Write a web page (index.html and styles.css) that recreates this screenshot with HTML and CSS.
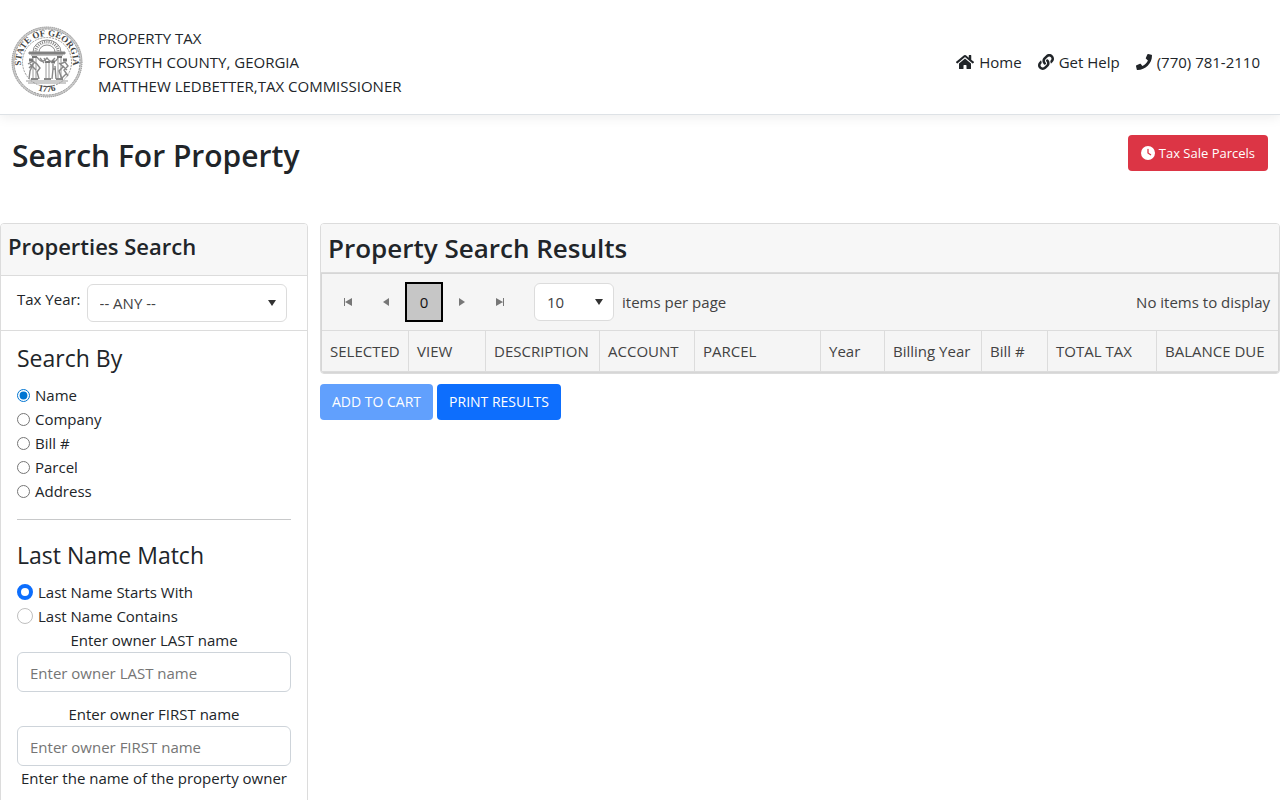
FILE: index.html
```html
<!DOCTYPE html>
<html lang="en">
<head>
    <meta charset="UTF-8">
    <meta name="viewport" content="width=device-width, initial-scale=1.0">
    <title>Search For Property</title>
    <link rel="stylesheet" href="styles.css">
</head>
<body>
    <header class="site-header">
        <div class="brand">
            <svg class="seal" viewBox="0 0 72 72" role="img" aria-label="State of Georgia seal">
                <defs>
                    <path id="sealTop" d="M10.9 42.7A26 26 0 1 1 61.1 42.7"/>
                    <path id="sealBottom" d="M18 60A30.5 30.5 0 0 0 54 60"/>
                </defs>
                <circle cx="36" cy="36" r="34" fill="#fff" stroke="#ccc" stroke-width="2.5"/>
                <circle cx="36" cy="36" r="35" fill="none" stroke="#888" stroke-width="1" stroke-dasharray="1 1"/>
                <circle cx="36" cy="36" r="33" fill="none" stroke="#999" stroke-width="1" stroke-dasharray="2 1"/>
                <circle cx="36" cy="36" r="24.500" fill="none" stroke="#999" stroke-width="1" stroke-dasharray="2 1"/>
                <text class="seal-text"><textPath href="#sealTop" startOffset="50%">STATE OF GEORGIA</textPath></text>
                <text class="seal-text"><textPath href="#sealBottom" startOffset="50%">1776</textPath></text>
                <!-- arch -->
                <path d="M22 26a14 12 0 0 1 28 0M28 26a8 7 0 0 1 16 0" fill="none" stroke="#888"/>
                <path d="M25 25.500a11 9.500 0 0 1 22 0" fill="none" stroke="#888" stroke-width="3" stroke-dasharray="1 1.200"/>
                <path d="M18 26h36v2H18zM20 29h32" fill="#777" stroke="#888"/>
                <!-- columns -->
                <path d="M21 31h5M34 36h5M46 31h5" stroke="#777" stroke-width="2"/>
                <path d="M22 32v21M25 32v21M35 37v16M38 37v16M47 32v21M50 32v21" stroke="#999" stroke-width="1"/>
                <path d="M26 31q5 8 10 1q6 8 11 0M29 32l4 5M40 36l4-4M33 32l2 4M43 33l-3 4" fill="none" stroke="#888" stroke-width="1.3"/>
                <path d="M20 53h7M33 53h7M45 53h7" stroke="#888" stroke-width="2"/>
                <!-- figures -->
                <path d="M17 38l5-3 4 3 3 4-3 4 2 7M22 38l-3 7-1 8M19 38l6 6M24 36l-6 6M42 38v5l-1 10M44 40l1 13M42 43h3M49 38l5-2 3 4-4 4 4 6M53 40l-5 5 3 8M48 37l8 7M56 47l-5 5" fill="none" stroke="#888" stroke-width="1.4"/>
                <path d="M18 34h4M52 34h4M41 36h3" stroke="#777" stroke-width="3"/>
                <path d="M15 55h42M17 57h38" stroke="#999"/>
            </svg>
            <div class="brand-text">
                <div>PROPERTY TAX</div>
                <div>FORSYTH COUNTY, GEORGIA</div>
                <div>MATTHEW LEDBETTER,TAX COMMISSIONER</div>
            </div>
        </div>
        <nav class="site-nav">
            <a href="#">
                <svg class="icon icon-wide" viewBox="0 0 576 512" aria-hidden="true"><path d="M280.37 148.26L96 300.11V464a16 16 0 0 0 16 16l112.06-.29a16 16 0 0 0 15.92-16V368a16 16 0 0 1 16-16h64a16 16 0 0 1 16 16v95.64a16 16 0 0 0 16 16.05L464 480a16 16 0 0 0 16-16V300L295.67 148.26a12.19 12.19 0 0 0-15.3 0zM571.6 251.47L488 182.56V44.05a12 12 0 0 0-12-12h-56a12 12 0 0 0-12 12v72.61L318.47 43a48 48 0 0 0-61 0L4.34 251.47a12 12 0 0 0-1.6 16.9l25.5 31A12 12 0 0 0 45.15 301l235.22-193.74a12.19 12.19 0 0 1 15.3 0L530.9 301a12 12 0 0 0 16.9-1.6l25.5-31a12 12 0 0 0-1.7-16.93z"/></svg>
                Home
            </a>
            <a href="#">
                <svg class="icon" viewBox="0 0 512 512" aria-hidden="true"><path d="M326.612 185.391c59.747 59.809 58.927 155.698.36 214.59-.11.12-.24.25-.36.37l-67.2 67.2c-59.27 59.27-155.699 59.262-214.96 0-59.27-59.26-59.27-155.7 0-214.96l37.106-37.106c9.84-9.84 26.786-3.3 27.294 10.606.648 17.722 3.826 35.527 9.69 52.721 1.986 5.822.567 12.262-3.783 16.612l-13.087 13.087c-28.026 28.026-28.905 73.66-1.155 101.96 28.024 28.579 74.086 28.749 102.325.51l67.2-67.19c28.191-28.191 28.073-73.757 0-101.83-3.701-3.694-7.429-6.564-10.341-8.569a16.037 16.037 0 0 1-6.947-12.606c-.396-10.567 3.348-21.456 11.698-29.806l21.054-21.055c5.521-5.521 14.182-6.199 20.584-1.731a152.482 152.482 0 0 1 20.522 17.197zM467.547 44.449c-59.261-59.262-155.69-59.27-214.96 0l-67.2 67.2c-.12.12-.25.25-.36.37-58.566 58.892-59.387 154.781.36 214.59a152.454 152.454 0 0 0 20.521 17.196c6.402 4.468 15.064 3.789 20.584-1.731l21.054-21.055c8.35-8.35 12.094-19.239 11.698-29.806a16.037 16.037 0 0 0-6.947-12.606c-2.912-2.005-6.64-4.875-10.341-8.569-28.073-28.073-28.191-73.639 0-101.83l67.2-67.19c28.239-28.239 74.3-28.069 102.325.51 27.75 28.3 26.872 73.934-1.155 101.96l-13.087 13.087c-4.35 4.35-5.769 10.79-3.783 16.612 5.864 17.194 9.042 34.999 9.69 52.721.509 13.906 17.454 20.446 27.294 10.606l37.106-37.106c59.271-59.259 59.271-155.699.001-214.959z"/></svg>
                Get Help
            </a>
            <a href="tel:7707812110">
                <svg class="icon" viewBox="0 0 512 512" aria-hidden="true"><path d="M493.4 24.6l-104-24c-11.3-2.6-22.9 3.3-27.5 13.9l-48 112c-4.2 9.8-1.4 21.3 6.9 28l60.6 49.6c-36 76.7-98.9 140.5-177.2 177.2l-49.6-60.6c-6.8-8.3-18.2-11.1-28-6.9l-112 48C3.9 366.5-2 378.1.6 389.4l24 104C27.1 504.2 36.7 512 48 512c256.1 0 464-207.5 464-464 0-11.2-7.7-20.9-18.6-23.4z"/></svg>
                (770) 781-2110
            </a>
        </nav>
    </header>

    <div class="page-title">
        <h1>Search For Property</h1>
        <button type="button" class="btn btn-danger">
            <svg class="icon-small" viewBox="0 0 512 512" aria-hidden="true"><path fill-rule="evenodd" d="M256 0a256 256 0 1 0 0 512A256 256 0 1 0 256 0zM232 120V256c0 8 4 15.500 10.700 20l96 64c11 7.400 25.900 4.400 33.300-6.700s4.400-25.900-6.700-33.300L280 243.200V120c0-13.300-10.700-24-24-24s-24 10.700-24 24z"/></svg>
            Tax Sale Parcels
        </button>
    </div>

    <main class="layout">
        <form class="card search-card">
            <div class="card-header">
                <h2>Properties Search</h2>
            </div>
            <div class="year-row">
                <label for="taxYear">Tax Year:</label>
                <div class="select-wrap">
                    <select id="taxYear">
                        <option>-- ANY --</option>
                    </select>
                </div>
            </div>
            <div class="card-body">
                <h3>Search By</h3>
                <label class="choice"><input type="radio" name="searchBy" checked> Name</label>
                <label class="choice"><input type="radio" name="searchBy"> Company</label>
                <label class="choice"><input type="radio" name="searchBy"> Bill #</label>
                <label class="choice"><input type="radio" name="searchBy"> Parcel</label>
                <label class="choice"><input type="radio" name="searchBy"> Address</label>
                <hr>
                <h3>Last Name Match</h3>
                <label class="choice"><input class="radio-lg" type="radio" name="lastMatch" checked> Last Name Starts With</label>
                <label class="choice"><input class="radio-lg" type="radio" name="lastMatch"> Last Name Contains</label>
                <div class="field">
                    <label for="lastName">Enter owner LAST name</label>
                    <input type="text" id="lastName" placeholder="Enter owner LAST name">
                </div>
                <div class="field">
                    <label for="firstName">Enter owner FIRST name</label>
                    <input type="text" id="firstName" placeholder="Enter owner FIRST name">
                </div>
                <p class="hint">Enter the name of the property owner</p>
            </div>
        </form>

        <section class="results">
            <div class="card">
                <div class="results-header">
                    <h2>Property Search Results</h2>
                </div>
                <div class="grid">
                    <div class="pager">
                        <button type="button" class="pager-btn" aria-label="First page"><svg viewBox="0 0 16 16"><path d="M4 4h1v8H4zM12 4v8L5 8z"/></svg></button>
                        <button type="button" class="pager-btn" aria-label="Previous page"><svg viewBox="0 0 16 16"><path d="M11 4v8L5 8z"/></svg></button>
                        <button type="button" class="pager-btn pager-current">0</button>
                        <button type="button" class="pager-btn" aria-label="Next page"><svg viewBox="0 0 16 16"><path d="M5 4v8l6-4z"/></svg></button>
                        <button type="button" class="pager-btn" aria-label="Last page"><svg viewBox="0 0 16 16"><path d="M4 4v8l7-4zM11 4h1v8h-1z"/></svg></button>
                        <div class="select-wrap page-size">
                            <select id="pageSize">
                                <option>10</option>
                            </select>
                        </div>
                        <label for="pageSize">items per page</label>
                        <span class="pager-info">No items to display</span>
                    </div>
                    <table>
                        <thead>
                            <tr>
                                <th class="col-selected">SELECTED</th>
                                <th class="col-view">VIEW</th>
                                <th class="col-description">DESCRIPTION</th>
                                <th class="col-account">ACCOUNT</th>
                                <th class="col-parcel">PARCEL</th>
                                <th class="col-year">Year</th>
                                <th class="col-billing">Billing Year</th>
                                <th class="col-bill">Bill #</th>
                                <th class="col-total">TOTAL TAX</th>
                                <th class="col-balance">BALANCE DUE</th>
                            </tr>
                        </thead>
                    </table>
                </div>
            </div>
            <div class="actions">
                <button type="button" class="btn btn-primary" disabled>ADD TO CART</button>
                <button type="button" class="btn btn-primary">PRINT RESULTS</button>
            </div>
        </section>
    </main>
</body>
</html>
```
FILE: styles.css
```css
* {
    box-sizing: border-box;
}
body {
    margin: 0;
    font-family: "Segoe UI", "Open Sans", "Noto Sans", sans-serif;
    font-size: 15px;
    line-height: 24px;
    color: #212529;
    background: #fff;
}
h1, h2, h3, p {
    margin: 0;
}
h1, h2 {
    font-weight: 600;
}
button, input, select {
    font: inherit;
    color: inherit;
}

/* header */
.site-header {
    display: flex;
    justify-content: space-between;
    align-items: center;
    padding: 26px 20px 16px 11px;
    border-bottom: 1px solid #dee2e6;
    box-shadow: 0 2px 12px rgba(0, 0, 0, 0.08);
}
.brand {
    display: flex;
    gap: 15px;
}
.seal {
    width: 72px;
    height: 72px;
}
.seal-text {
    font-family: "Liberation Serif", serif;
    font-size: 9px;
    font-weight: bold;
    fill: #444;
    text-anchor: middle;
}
.site-nav {
    display: flex;
    gap: 16px;
}
.site-nav a {
    display: flex;
    align-items: center;
    gap: 5px;
    color: inherit;
    text-decoration: none;
}
.icon {
    width: 16px;
    height: 16px;
    fill: currentColor;
}
.icon-wide {
    width: 18px;
}
.icon-small {
    width: 14px;
    height: 14px;
    fill: currentColor;
}

.page-title {
    display: flex;
    justify-content: space-between;
    align-items: flex-start;
    padding: 20px 12px 46px;
}
h1 {
    font-size: 30px;
    line-height: 42px;
}

/* buttons */
.btn {
    display: inline-flex;
    align-items: center;
    gap: 4px;
    height: 36px;
    padding: 0 13px;
    border: 0;
    border-radius: 4px;
    font-size: 13px;
    color: #fff;
    cursor: pointer;
}
.btn-danger {
    background: #dc3545;
}
.btn-primary {
    padding: 0 12px;
    font-size: 14px;
    background: #0d6efd;
}
.btn:disabled {
    opacity: 0.65;
    cursor: default;
}

/* cards */
.layout {
    display: grid;
    grid-template-columns: 308px 1fr;
    gap: 12px;
    align-items: start;
}
.card {
    border: 1px solid #dcdcdc;
    border-radius: 4px;
    overflow: hidden;
}
.card-header, .results-header {
    padding: 8px 7px;
    background: #f7f7f7;
    border-bottom: 1px solid #dcdcdc;
}
.card-header {
    padding: 6px 7px 13px;
}
.card-header h2 {
    font-size: 22px;
    line-height: 32px;
}
.results-header h2 {
    font-size: 26px;
    line-height: 32px;
}
.card-body {
    padding: 11px 16px 16px;
}
.year-row {
    display: flex;
    gap: 6px;
    padding: 8px 16px;
    border-bottom: 1px solid #dcdcdc;
}
.year-row label {
    padding-top: 3px;
}

/* drop-downs */
.select-wrap {
    position: relative;
    width: 200px;
}
.select-wrap select {
    appearance: none;
    display: block;
    width: 100%;
    height: 38px;
    padding: 0 12px;
    border: 1px solid #dcdcdc;
    border-radius: 6px;
    background: #fff;
    color: #424242;
}
.select-wrap::after {
    content: "";
    position: absolute;
    top: 16px;
    right: 11px;
    border: 4px solid transparent;
    border-top: 6px solid #333;
    border-bottom: 0;
    pointer-events: none;
}
.page-size {
    width: 80px;
    margin: 0 8px 0 15px;
}

/* search form */
h3 {
    font-size: 23px;
    font-weight: 400;
    line-height: 32px;
    margin-bottom: 9px;
}
.choice {
    display: flex;
    align-items: center;
    gap: 5px;
}
.choice input {
    width: 13px;
    height: 13px;
    margin: 0;
    accent-color: #0075d2;
}
.choice .radio-lg {
    appearance: none;
    width: 16px;
    height: 16px;
    border: 1px solid #bfbfbf;
    border-radius: 50%;
    background: #fff;
}
.choice .radio-lg:checked {
    border: 4px solid #0d6efd;
}
hr {
    margin: 16px 0 19px;
    border: 0;
    border-top: 1px solid #c8c9ca;
}
.field {
    margin-bottom: 10px;
    text-align: center;
}
.field label {
    display: block;
}
.field input {
    display: block;
    width: 100%;
    height: 40px;
    padding: 2px 12px 0;
    border: 1px solid #ced4da;
    border-radius: 6px;
}
.field input::placeholder {
    color: #757575;
}
.field:has(+ .hint) {
    margin-bottom: 0;
}
.hint {
    text-align: center;
}

/* results grid */
.grid {
    border: 1px solid #d6d6d6;
    background: #f5f5f5;
    color: #424242;
}
.pager {
    display: flex;
    align-items: center;
    padding: 8px 8px 8px 7px;
    border-bottom: 1px solid #dcdcdc;
}
.pager-btn {
    display: flex;
    align-items: center;
    justify-content: center;
    width: 38px;
    height: 40px;
    padding: 0;
    border: 0;
    background: none;
}
.pager-btn svg {
    width: 16px;
    height: 16px;
    fill: #777;
}
.pager-current {
    border: 2px solid #000;
    background: #c6c6c6;
    color: #111;
}
.pager-info {
    margin-left: auto;
}
table {
    width: 100%;
    table-layout: fixed;
    border-collapse: separate;
    border-spacing: 0;
}
th {
    height: 41px;
    padding: 0 0 0 8px;
    border-left: 1px solid #dcdcdc;
    border-bottom: 1px solid #dcdcdc;
    font-weight: 400;
    text-align: left;
    white-space: nowrap;
}
th:first-child {
    border-left: 0;
}
.col-selected { width: 86px; }
.col-view { width: 77px; }
.col-description { width: 114px; }
.col-account { width: 95px; }
.col-parcel { width: 126px; }
.col-year { width: 64px; }
.col-billing { width: 97px; }
.col-bill { width: 66px; }
.col-total { width: 109px; }

.actions {
    display: flex;
    gap: 4px;
    margin-top: 10px;
}
```
